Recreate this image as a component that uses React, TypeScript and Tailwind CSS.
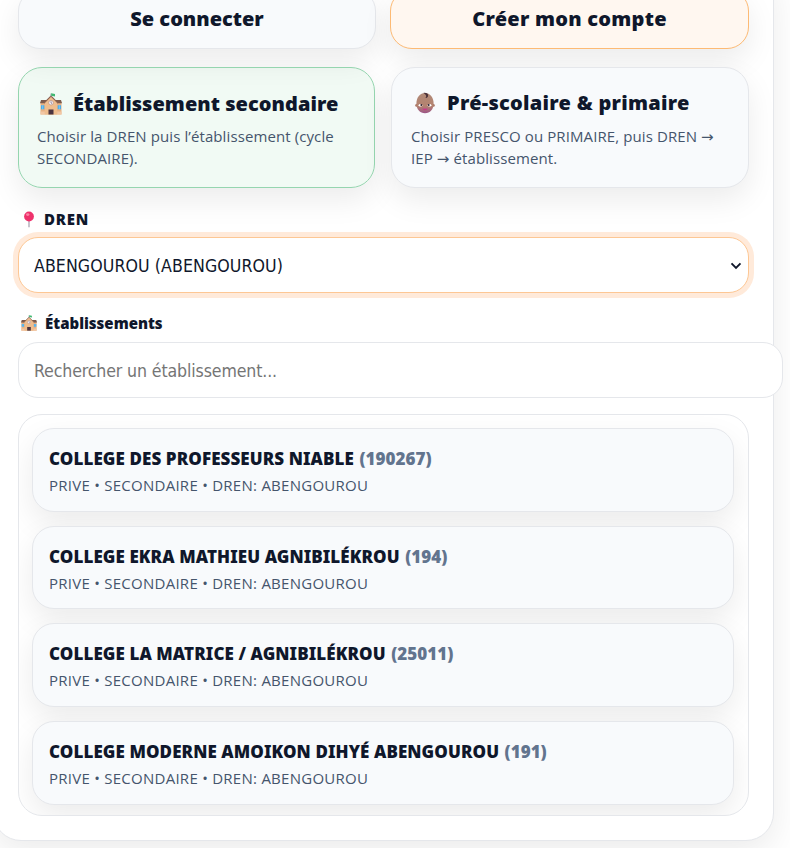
import React, { useState } from 'react';
import clsx from 'clsx';

interface School {
  name: string;
  code: string;
  dren: string;
}

interface IconProps {
  className?: string;
}

const SCHOOLS: School[] = [
  { name: 'COLLEGE DES PROFESSEURS NIABLE', code: '190267', dren: 'ABENGOUROU' },
  { name: 'COLLEGE EKRA MATHIEU AGNIBILÉKROU', code: '194', dren: 'ABENGOUROU' },
  { name: 'COLLEGE LA MATRICE / AGNIBILÉKROU', code: '25011', dren: 'ABENGOUROU' },
  { name: 'COLLEGE MODERNE AMOIKON DIHYÉ ABENGOUROU', code: '191', dren: 'ABENGOUROU' },
];

const SchoolIcon: React.FC<IconProps> = ({ className }) => (
  <svg viewBox="0 0 22 22" className={className}>
    <rect x="0.5" y="9" width="21" height="12.5" fill="#e8b184" />
    <path d="M1 7h20l1 3.2H0z" fill="#7d5b4d" />
    <path d="M4.8 9.4 11 3l6.2 6.4V21.5H4.8z" fill="#efbd8e" />
    <path d="M4 10.2 11 3l7 7.2" fill="none" stroke="#8a5f50" strokeWidth="1.1" />
    <path d="M11 4V.5" stroke="#8d8792" strokeWidth="0.8" />
    <path d="M11.2.2 15 1v2.5l-3.8-.7z" fill="#3fb871" />
    <circle cx="11" cy="9.7" r="2.3" fill="#f4eef5" stroke="#a67f77" strokeWidth="0.5" />
    <path d="M11 8.3v1.6l1 .7" fill="none" stroke="#5c4a5b" strokeWidth="0.6" />
    <path d="M1 12.3h3.3v4H1zM17.7 12.3H21v4h-3.3z" fill="#45adee" />
    <path d="M2.65 12.3v4M19.35 12.3v4" stroke="#b9dff3" strokeWidth="0.5" />
    <rect x="8.5" y="16.5" width="5" height="5" fill="#4b3440" />
    <path d="M.5 18.5h4.3v3H.5zM17.2 18.5h4.3v3h-4.3z" fill="#f2c7a5" />
  </svg>
);

const BabyIcon: React.FC<IconProps> = ({ className }) => (
  <svg viewBox="0 0 20 22" className={className}>
    <defs>
      <linearGradient id="skin" x1="0" y1="0" x2="0" y2="1">
        <stop offset="0" stopColor="#b08a78" />
        <stop offset="0.65" stopColor="#b4826f" />
        <stop offset="1" stopColor="#9c5587" />
      </linearGradient>
    </defs>
    <circle cx="1.6" cy="13.4" r="1.4" fill="#a87765" />
    <circle cx="18.4" cy="13.4" r="1.4" fill="#a87765" />
    <path d="M10 1c5 0 8.6 4.2 8.6 10.6 0 6-3.6 9.6-8.6 9.6s-8.6-3.6-8.6-9.6C1.400 5.200 5 1 10 1z" fill="url(#skin)" />
    <path d="M8.500.9c3-.3 4.900.9 4.600 2.900-.2 1.600-1.600 2.600-2.600 2 1.400-1.500.8-3.300-2-4.900z" fill="#493037" />
    <ellipse cx="5.500" cy="13.300" rx="1.900" ry="1.300" fill="#fff" />
    <ellipse cx="14.500" cy="13.300" rx="1.900" ry="1.300" fill="#fff" />
    <circle cx="6.300" cy="13.100" r="1" fill="#34232e" />
    <circle cx="13.700" cy="13.100" r="1" fill="#34232e" />
    <path d="M7.500 16.600q2.500.5 5 0-.5 1.700-2.500 1.700t-2.500-1.700z" fill="#d0308f" />
  </svg>
);

const PinIcon: React.FC<IconProps> = ({ className }) => (
  <svg viewBox="0 0 12 17" className={className}>
    <path d="M6 9v7.3" stroke="#9a93a3" strokeWidth="1.1" />
    <circle cx="6" cy="5.5" r="4.9" fill="#ee316b" />
    <ellipse cx="4.7" cy="3.6" rx="1.7" ry="1.3" fill="#fb85a5" />
  </svg>
);

const SHADOW = 'shadow-[0_12px_30px_rgba(0,0,0,0.08)]';
const HEADING = "font-['Noto_Sans',sans-serif] font-black";

interface CycleCardProps {
  icon: React.ReactNode;
  title: React.ReactNode;
  description: string;
  active: boolean;
  onSelect: () => void;
}

const CycleCard: React.FC<CycleCardProps> = ({ icon, title, description, active, onSelect }) => (
  <button
    onClick={onSelect}
    className={clsx(
      'flex h-[121px] flex-col items-start rounded-[24px] border pt-[19px] pr-[10px] pl-[18px] text-left',
      SHADOW,
      active ? 'border-[#95d5af] bg-[#16a34a]/6' : 'border-gray-200 bg-slate-50 pl-[19px]',
    )}
  >
    <div className="flex h-[32px] items-center">
      {icon}
      {title}
    </div>
    <p className="mt-[6px] text-[15px] leading-[22px] tracking-[0.1px] whitespace-pre-line text-slate-600">{description}</p>
  </button>
);

export default function App() {
  const [cycle, setCycle] = useState('secondaire');
  const [search, setSearch] = useState('');

  const schools = SCHOOLS.filter((s) => s.name.toLowerCase().includes(search.toLowerCase()));

  return (
    <div className="h-[848px] w-[790px] overflow-hidden bg-white font-['Open_Sans','DejaVu_Sans',sans-serif] text-slate-900">
      <div className="-mt-[36px] -ml-[7px] h-[877px] w-[781px] rounded-[28px] border border-gray-200 bg-white p-6 shadow-[0_12px_34px_rgba(0,0,0,0.08)]">
        <div className="grid grid-cols-[358px_1fr] gap-[14px]">
          <button className={clsx('h-[60px] rounded-[22px] border border-gray-200 bg-slate-50 pb-px text-[20px]', HEADING, SHADOW)}>
            Se connecter
          </button>
          <button
            className={clsx('h-[60px] rounded-[22px] border border-[#fdba74] bg-[#fff7f0] pb-px text-[20px] tracking-[0.25px]', HEADING, SHADOW)}
          >
            Créer mon compte
          </button>
        </div>

        <div className="mt-[18px] grid grid-cols-[357px_1fr] gap-4">
          <CycleCard
            icon={<SchoolIcon className="mt-[2px] ml-[3px] h-[22px] w-[22px]" />}
            title={<span className={clsx('mt-px ml-[11px] text-[20px] tracking-[0.04px]', HEADING)}>Établissement secondaire</span>}
            description={'Choisir la DREN puis l’établissement (cycle\nSECONDAIRE).'}
            active={cycle === 'secondaire'}
            onSelect={() => setCycle('secondaire')}
          />
          <CycleCard
            icon={<BabyIcon className="ml-[4px] h-[22px] w-[20px]" />}
            title={<span className={clsx('ml-[12px] text-[20px] tracking-[0.27px]', HEADING)}>Pré-scolaire &amp; primaire</span>}
            description={'Choisir PRESCO ou PRIMAIRE, puis DREN →\nIEP → établissement.'}
            active={cycle === 'primaire'}
            onSelect={() => setCycle('primaire')}
          />
        </div>

        <label className={clsx('mt-[20px] flex h-[22px] items-center text-[15px] tracking-[0.8px]', HEADING)}>
          <PinIcon className="mr-[9px] ml-[5px] h-[17px] w-[12px]" />
          DREN
        </label>
        <div className="relative mt-[7px]">
          <select className="h-[56px] w-full appearance-none rounded-[20px] border border-[#fdc794] bg-white px-[15px] pt-[3px] font-['DejaVu_Sans_Condensed',sans-serif] text-[17.6px] tracking-[0.08px] shadow-[0_0_0_5px_#ffeada] outline-none">
            <option>ABENGOUROU (ABENGOUROU)</option>
          </select>
          <svg viewBox="0 0 12 8" className="pointer-events-none absolute top-[25px] right-[7px] h-2 w-3">
            <path d="M1.5 1.3 6 5.8l4.5-4.5" fill="none" stroke="#0f172a" strokeWidth="1.9" />
          </svg>
        </div>

        <label className={clsx('mt-[19px] flex h-[22px] items-center text-[15px]', HEADING)}>
          <SchoolIcon className="mr-[8px] ml-[3px] h-[16px] w-[16px]" />
          Établissements
        </label>
        <input
          value={search}
          onChange={(e) => setSearch(e.target.value)}
          placeholder="Rechercher un établissement..."
          className="mt-[8px] block h-[56px] w-[765px] max-w-none rounded-[20px] border border-gray-200 bg-white px-[15px] pt-[2px] font-['DejaVu_Sans_Condensed',sans-serif] text-[17.6px] tracking-[-0.13px] outline-none placeholder:text-[#757575]"
        />

        <div className="mt-4 flex h-[402px] flex-col gap-[14px] overflow-hidden rounded-[24px] border border-gray-200 py-[13px] pr-[14px] pl-[13px]">
          {schools.map((school) => (
            <button
              key={school.code}
              className={clsx('h-[83.7px] shrink-0 rounded-[22px] border border-gray-200 bg-slate-50 px-4 pt-[5px] text-left', SHADOW)}
            >
              <p className={clsx('text-[17px] leading-[26px] tracking-[0.09px] whitespace-nowrap', HEADING)}>
                {school.name} <span className="ml-[1px] tracking-normal text-slate-500">({school.code})</span>
              </p>
              <p className="text-[15px] leading-[27px] tracking-[0.26px] text-slate-600">PRIVE • SECONDAIRE • DREN: {school.dren}</p>
            </button>
          ))}
        </div>
      </div>
    </div>
  );
}
